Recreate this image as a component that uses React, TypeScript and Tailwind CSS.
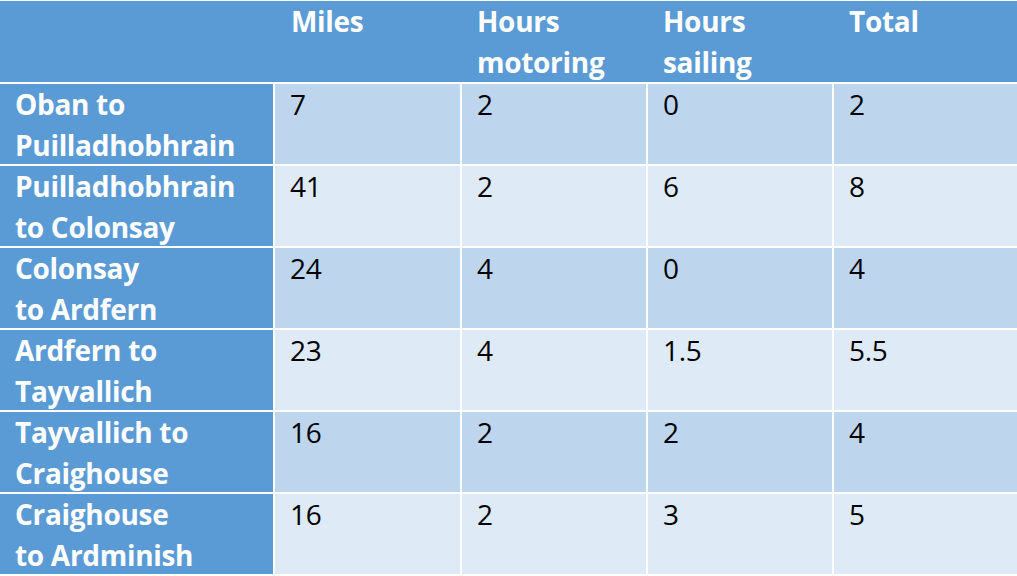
import React from 'react';

const rows = [
  { leg: ['Oban to', 'Puilladhobhrain'], miles: '7', motoring: '2', sailing: '0', total: '2' },
  { leg: ['Puilladhobhrain', 'to Colonsay'], miles: '41', motoring: '2', sailing: '6', total: '8' },
  { leg: ['Colonsay', 'to Ardfern'], miles: '24', motoring: '4', sailing: '0', total: '4' },
  { leg: ['Ardfern to', 'Tayvallich'], miles: '23', motoring: '4', sailing: '1.5', total: '5.5' },
  { leg: ['Tayvallich to', 'Craighouse'], miles: '16', motoring: '2', sailing: '2', total: '4' },
  { leg: ['Craighouse', 'to Ardminish'], miles: '16', motoring: '2', sailing: '3', total: '5' },
];

const cols = 'grid grid-cols-[273px_187px_186px_186px_185px]';

function App() {
  return (
    <div className="w-[1017px] h-[576px] overflow-hidden bg-white font-['Open_Sans','Liberation_Sans',sans-serif] text-[28px] leading-[41px] tracking-[-0.3px]">
      {/* header */}
      <div className={`${cols} h-[82px] border-t border-white bg-[#5b9bd5] font-bold text-white`}>
        <div />
        <div className="px-[18px]">Miles</div>
        <div className="px-[17px]">Hours<br />motoring</div>
        <div className="px-[17px]">Hours<br />sailing</div>
        <div className="px-[17px]">Total</div>
      </div>

      {rows.map((r, i) => (
        <div
          key={i}
          className={`${cols} h-[82px] border-t-2 border-white text-black ${i % 2 === 0 ? 'bg-[#bdd6ee]' : 'bg-[#deeaf6]'}`}
        >
          <div className="h-[80px] overflow-hidden bg-[#5b9bd5] px-[15px] font-bold text-white">
            {r.leg[0]}<br />{r.leg[1]}
          </div>
          <div className="h-[80px] border-l-2 border-white px-[15px]">{r.miles}</div>
          <div className="h-[80px] border-l-2 border-white px-[15px]">{r.motoring}</div>
          <div className="h-[80px] border-l-2 border-white px-[15px]">{r.sailing}</div>
          <div className="h-[80px] border-l-2 border-white px-[15px]">{r.total}</div>
        </div>
      ))}
    </div>
  );
}

export default App;
